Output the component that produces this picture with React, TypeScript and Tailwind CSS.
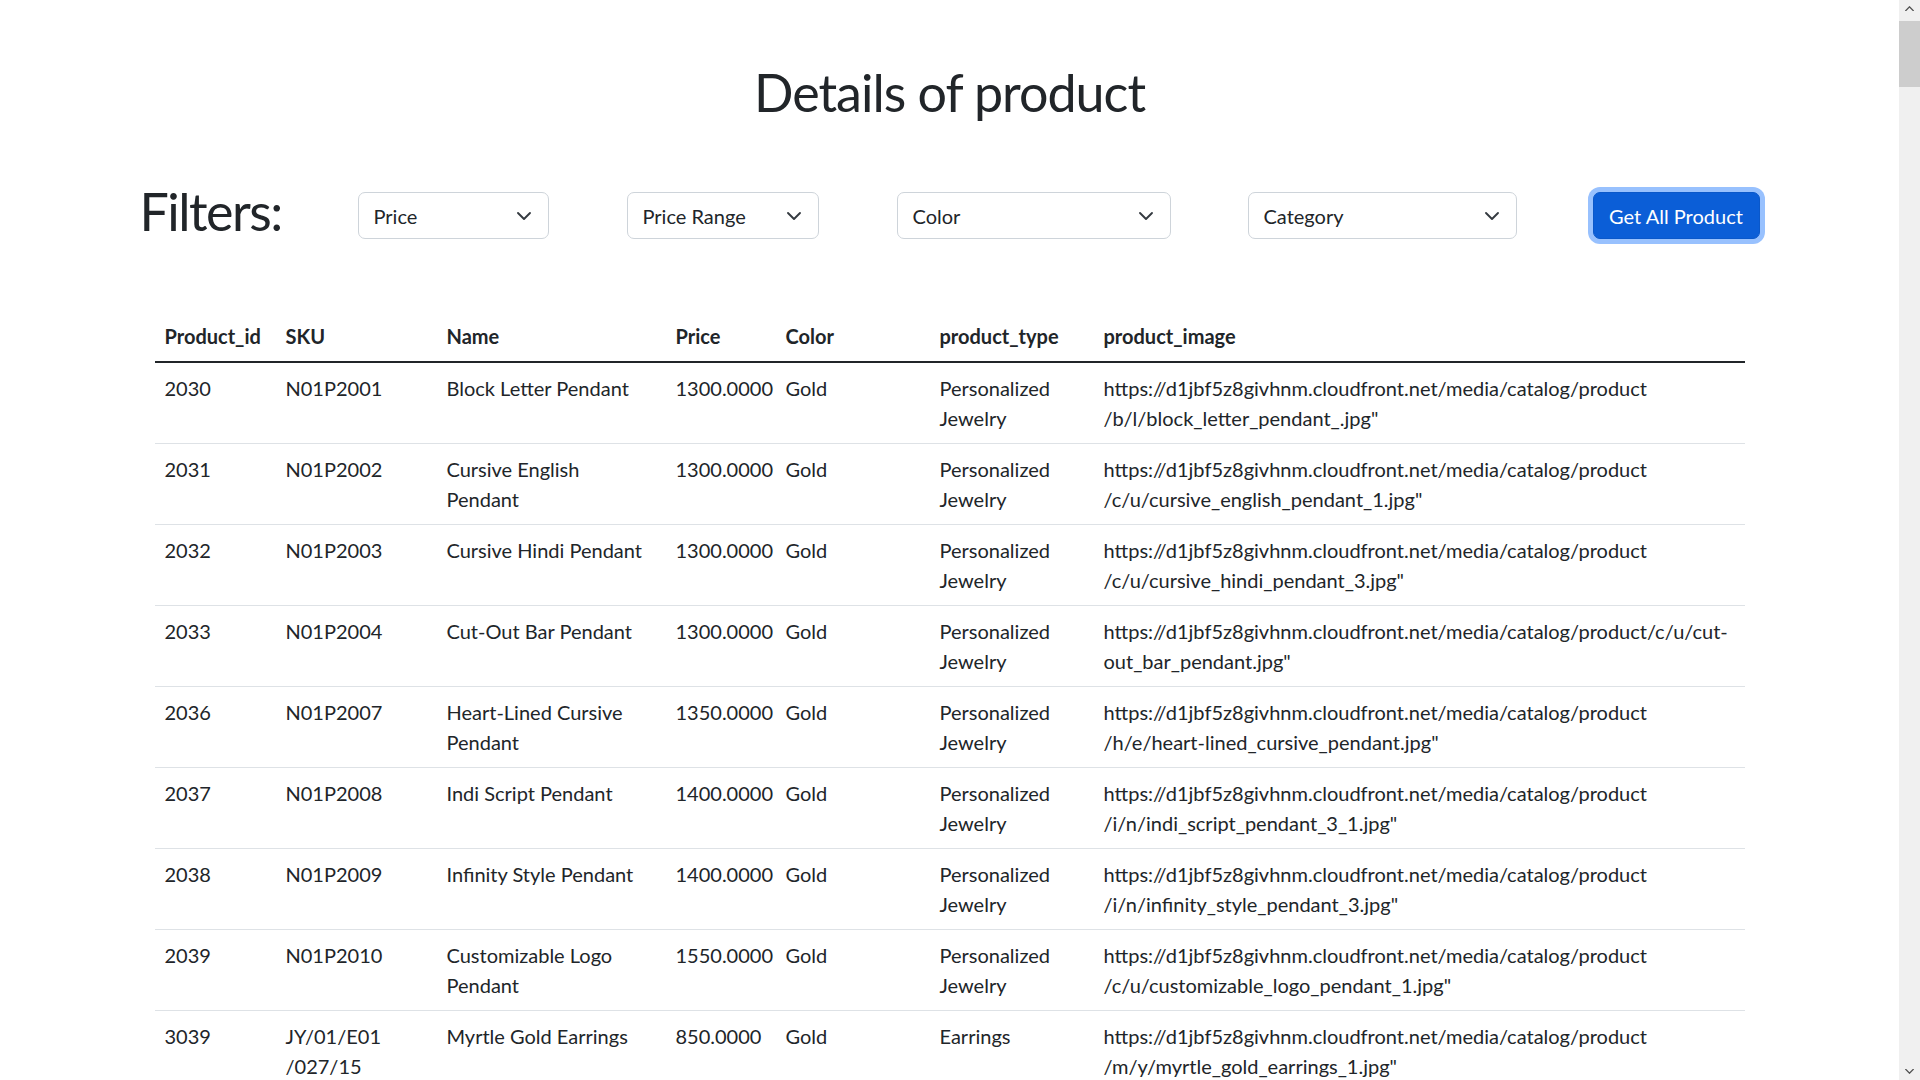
const BASE = "https://d1jbf5z8givhnm.cloudfront.net/media/catalog/product";

type Product = {
  id: number;
  sku: string[];
  name: string;
  price: string;
  color: string;
  type: string;
  image: string;
};

const products: Product[] = [
  { id: 2030, sku: ["N01P2001"], name: "Block Letter Pendant", price: "1300.0000", color: "Gold", type: "Personalized Jewelry", image: "/b/l/block_letter_pendant_.jpg\"" },
  { id: 2031, sku: ["N01P2002"], name: "Cursive English Pendant", price: "1300.0000", color: "Gold", type: "Personalized Jewelry", image: "/c/u/cursive_english_pendant_1.jpg\"" },
  { id: 2032, sku: ["N01P2003"], name: "Cursive Hindi Pendant", price: "1300.0000", color: "Gold", type: "Personalized Jewelry", image: "/c/u/cursive_hindi_pendant_3.jpg\"" },
  { id: 2033, sku: ["N01P2004"], name: "Cut-Out Bar Pendant", price: "1300.0000", color: "Gold", type: "Personalized Jewelry", image: "/c/u/cut-out_bar_pendant.jpg\"" },
  { id: 2036, sku: ["N01P2007"], name: "Heart-Lined Cursive Pendant", price: "1350.0000", color: "Gold", type: "Personalized Jewelry", image: "/h/e/heart-lined_cursive_pendant.jpg\"" },
  { id: 2037, sku: ["N01P2008"], name: "Indi Script Pendant", price: "1400.0000", color: "Gold", type: "Personalized Jewelry", image: "/i/n/indi_script_pendant_3_1.jpg\"" },
  { id: 2038, sku: ["N01P2009"], name: "Infinity Style Pendant", price: "1400.0000", color: "Gold", type: "Personalized Jewelry", image: "/i/n/infinity_style_pendant_3.jpg\"" },
  { id: 2039, sku: ["N01P2010"], name: "Customizable Logo Pendant", price: "1550.0000", color: "Gold", type: "Personalized Jewelry", image: "/c/u/customizable_logo_pendant_1.jpg\"" },
  { id: 3039, sku: ["JY/01/E01", "/027/15"], name: "Myrtle Gold Earrings", price: "850.0000", color: "Gold", type: "Earrings", image: "/m/y/myrtle_gold_earrings_1.jpg\"" },
];

const headers: [string, string][] = [
  ["Product_id", "w-[121px]"],
  ["SKU", "w-[161px]"],
  ["Name", "w-[229px]"],
  ["Price", "w-[110px]"],
  ["Color", "w-[154px]"],
  ["product_type", "w-[164px]"],
  ["product_image", ""],
];

function Chevron() {
  return (
    <svg viewBox="0 0 16 16" className="w-[16px] h-[16px] shrink-0" fill="none">
      <path d="m2 5 6 6 6-6" stroke="#343a40" strokeWidth="1.9" strokeLinecap="round" strokeLinejoin="round" />
    </svg>
  );
}

function Select({ label, width }: { label: string; width: string }) {
  return (
    <div className={`${width} h-[47px] flex items-center justify-between pl-[15px] pr-[16px] border border-[#ced4da] rounded-[7px] bg-white text-[20px] leading-[30px] text-[#212529]`}>
      <span>{label}</span>
      <Chevron />
    </div>
  );
}

function ScrollBar() {
  return (
    <div className="w-[21px] h-screen shrink-0 bg-[#f0f0f0] flex flex-col items-center">
      <div className="h-[17px] w-full flex items-center justify-center">
        <svg viewBox="0 0 10 6" className="w-[9px] h-[5px]">
          <path d="M0 6 5 1 10 6" fill="none" stroke="#505050" strokeWidth="1.6" />
        </svg>
      </div>
      <div className="w-full h-[66px] bg-[#cdcdcd] mt-[4px]" />
      <div className="flex-1" />
      <div className="h-[17px] w-full flex items-center justify-center">
        <svg viewBox="0 0 10 6" className="w-[9px] h-[5px]">
          <path d="M0 0 5 5 10 0" fill="none" stroke="#505050" strokeWidth="1.6" />
        </svg>
      </div>
    </div>
  );
}

export default function App() {
  const cell = "p-[10px] border-b border-[#dee2e6] align-top";
  return (
    <div className="flex h-screen w-screen overflow-hidden bg-white text-[#212529] font-['Lato',sans-serif]">
      <main className="flex-1 overflow-hidden">
        <h1 className="pt-[61px] text-center text-[52px] leading-[1.2] tracking-[-1px] font-normal">
          Details of product
        </h1>

        <div className="mx-auto w-[1620px] mt-[69px] flex items-start">
          <h1 className="w-[218px] -mt-[4px] text-[52px] leading-[47px] tracking-[-1.5px] font-normal">Filters:</h1>
          <Select label="Price" width="w-[191px]" />
          <div className="ml-[78px]">
            <Select label="Price Range" width="w-[192px]" />
          </div>
          <div className="ml-[78px]">
            <Select label="Color" width="w-[274px]" />
          </div>
          <div className="ml-[77px]">
            <Select label="Category" width="w-[269px]" />
          </div>
          <button className="ml-[76px] w-[167px] h-[47px] rounded-[7px] bg-[#0b5ed7] border border-[#0a58ca] text-white text-[20px] leading-[30px] ring-[5px] ring-[#98c1fe]">
            Get All Product
          </button>
        </div>

        <table className="mx-auto mt-[72px] w-[1590px] table-fixed border-separate border-spacing-0 text-[20px] leading-[30px] text-left">
          <thead>
            <tr>
              {headers.map(([h, w]) => (
                <th key={h} className={`${w} p-[10px] font-bold border-b-2 border-[#212529] align-bottom`}>
                  {h}
                </th>
              ))}
            </tr>
          </thead>
          <tbody>
            {products.map((p) => (
              <tr key={p.id}>
                <td className={cell}>{p.id}</td>
                <td className={cell}>
                  {p.sku.map((s, i) => (
                    <span key={i}>
                      {i > 0 && <wbr />}
                      {s}
                    </span>
                  ))}
                </td>
                <td className={cell}>{p.name}</td>
                <td className={cell}>{p.price}</td>
                <td className={cell}>{p.color}</td>
                <td className={cell}>{p.type}</td>
                <td className={cell}>
                  {BASE}
                  <wbr />
                  {p.image}
                </td>
              </tr>
            ))}
          </tbody>
        </table>
      </main>
      <ScrollBar />
    </div>
  );
}
